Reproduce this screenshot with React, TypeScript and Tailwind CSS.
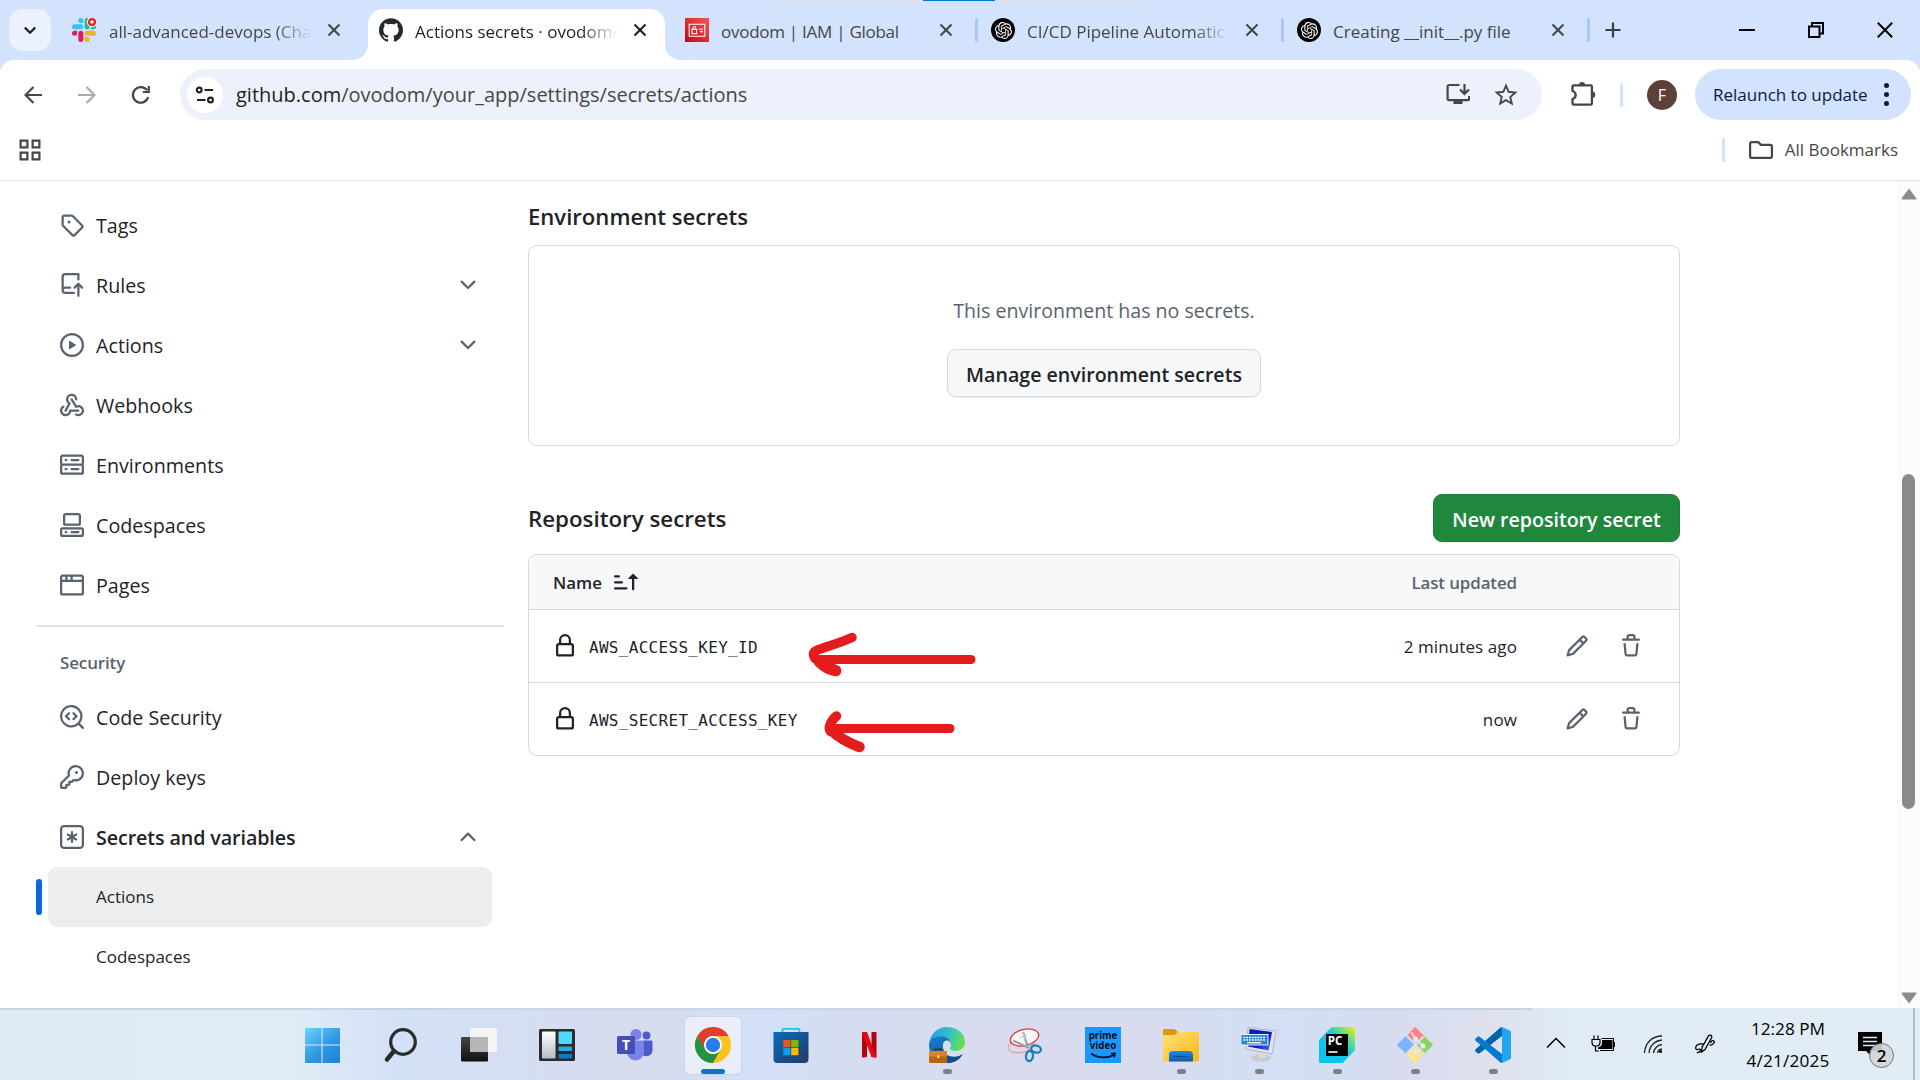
import type { ReactNode } from "react";
import { SiGithub, SiOpenai } from "react-icons/si";
import { MdStarBorder } from "react-icons/md";

const octicons = {
  tag: "M1 7.775V2.75C1 1.784 1.784 1 2.75 1h5.025c.464 0 .91.184 1.238.513l6.25 6.25a1.75 1.75 0 0 1 0 2.474l-5.026 5.026a1.75 1.75 0 0 1-2.474 0l-6.25-6.25A1.752 1.752 0 0 1 1 7.775Zm1.5 0c0 .066.026.13.073.177l6.25 6.25a.25.25 0 0 0 .354 0l5.025-5.025a.25.25 0 0 0 0-.354l-6.25-6.25a.25.25 0 0 0-.177-.073H2.75a.25.25 0 0 0-.25.25ZM6 5a1 1 0 1 1 0 2 1 1 0 0 1 0-2Z",
  rules: "M1 2.5A2.5 2.5 0 0 1 3.5 0h8.75a.75.75 0 0 1 .75.75v3.5a.75.75 0 0 1-1.5 0V1.5h-8a1 1 0 0 0-1 1v6.708A2.493 2.493 0 0 1 3.5 9h3.25a.75.75 0 0 1 0 1.5H3.5a1 1 0 0 0 0 2h5.75a.75.75 0 0 1 0 1.5H3.5A2.5 2.5 0 0 1 1 11.5Zm13.23 7.79v-.001l-1.224-1.224v6.184a.75.75 0 0 1-1.5 0V9.066L10.28 10.29a.75.75 0 0 1-1.06-1.061l2.505-2.504a.75.75 0 0 1 1.06 0L15.29 9.23a.751.751 0 0 1-.018 1.042.751.751 0 0 1-1.042.018Z",
  play: "M8 0a8 8 0 1 1 0 16A8 8 0 0 1 8 0ZM1.5 8a6.5 6.5 0 1 0 13 0 6.5 6.5 0 0 0-13 0Zm4.879-2.773 4.264 2.559a.25.25 0 0 1 0 .428l-4.264 2.559A.25.25 0 0 1 6 10.559V5.442a.25.25 0 0 1 .379-.215Z",
  webhook: "M5.5 4.25a2.25 2.25 0 0 1 4.5 0 .75.75 0 0 0 1.5 0 3.75 3.75 0 1 0-6.14 2.889l-2.272 4.258a.75.75 0 0 0 1.324.706L7 7.25a.75.75 0 0 0-.309-1.015A2.25 2.25 0 0 1 5.5 4.25ZM7.364 3.607a.75.75 0 0 1 1.03.257l2.608 4.349a3.75 3.75 0 1 1-.628 6.785.75.75 0 0 1 .752-1.299 2.25 2.25 0 1 0-.033-3.88.75.75 0 0 1-1.03-.256L7.107 4.636a.75.75 0 0 1 .257-1.03ZM2.9 8.776A.75.75 0 0 1 2.625 9.8 2.25 2.25 0 1 0 6 11.75a.75.75 0 0 1 .75-.751h5.5a.75.75 0 0 1 0 1.5H7.425a3.751 3.751 0 1 1-5.55-3.998.75.75 0 0 1 1.024.274Z",
  server: "M1.75 1h12.5c.966 0 1.75.784 1.75 1.75v4c0 .372-.116.717-.314 1 .198.283.314.628.314 1v4a1.75 1.75 0 0 1-1.75 1.75H1.75A1.75 1.75 0 0 1 0 12.75v-4c0-.358.109-.707.314-1a1.739 1.739 0 0 1-.314-1v-4C0 1.784.784 1 1.75 1ZM1.5 2.75v4c0 .138.112.25.25.25h12.5a.25.25 0 0 0 .25-.25v-4a.25.25 0 0 0-.25-.25H1.75a.25.25 0 0 0-.25.25Zm.25 5.75a.25.25 0 0 0-.25.25v4c0 .138.112.25.25.25h12.5a.25.25 0 0 0 .25-.25v-4a.25.25 0 0 0-.25-.25ZM7 4.75A.75.75 0 0 1 7.75 4h4.5a.75.75 0 0 1 0 1.5h-4.5A.75.75 0 0 1 7 4.75ZM7.75 10h4.5a.75.75 0 0 1 0 1.5h-4.5a.75.75 0 0 1 0-1.5ZM3 4.75A.75.75 0 0 1 3.75 4h.5a.75.75 0 0 1 0 1.5h-.5A.75.75 0 0 1 3 4.75ZM3.75 10h.5a.75.75 0 0 1 0 1.5h-.5a.75.75 0 0 1 0-1.5Z",
  codespaces: "M0 11.25c0-.966.784-1.75 1.75-1.75h12.5c.966 0 1.75.784 1.75 1.75v3A1.75 1.75 0 0 1 14.25 16H1.75A1.75 1.75 0 0 1 0 14.25Zm2-9.5C2 .784 2.784 0 3.75 0h8.5C13.216 0 14 .784 14 1.75v5a1.75 1.75 0 0 1-1.75 1.75h-8.5A1.75 1.75 0 0 1 2 6.75Zm1.75-.25a.25.25 0 0 0-.25.25v5c0 .138.112.25.25.25h8.5a.25.25 0 0 0 .25-.25v-5a.25.25 0 0 0-.25-.25Zm-2 9.5a.25.25 0 0 0-.25.25v3c0 .138.112.25.25.25h12.5a.25.25 0 0 0 .25-.25v-3a.25.25 0 0 0-.25-.25ZM7 12.75a.75.75 0 0 1 .75-.75h4.5a.75.75 0 0 1 0 1.5h-4.5a.75.75 0 0 1-.75-.75Zm-4 0a.75.75 0 0 1 .75-.75h.5a.75.75 0 0 1 0 1.5h-.5a.75.75 0 0 1-.75-.75Z",
  browser: "M0 2.75C0 1.784.784 1 1.75 1h12.5c.966 0 1.75.784 1.75 1.75v10.5A1.75 1.75 0 0 1 14.25 15H1.75A1.75 1.75 0 0 1 0 13.25ZM14.5 6h-13v7.25c0 .138.112.25.25.25h12.5a.25.25 0 0 0 .25-.25Zm-6-3.5v2h6V2.75a.25.25 0 0 0-.25-.25ZM5 2.5v2h2v-2Zm-3.25 0a.25.25 0 0 0-.25.25V4.5h2v-2Z",
  codescan: "M8.47 4.97a.75.75 0 0 0 0 1.06L9.94 7.5 8.47 8.97a.75.75 0 1 0 1.06 1.06l2-2a.75.75 0 0 0 0-1.06l-2-2a.75.75 0 0 0-1.06 0ZM6.53 6.03a.75.75 0 0 0-1.06-1.06l-2 2a.75.75 0 0 0 0 1.06l2 2a.75.75 0 1 0 1.06-1.06L5.06 7.5l1.47-1.47ZM12.246 13.307a7.501 7.501 0 1 1 1.06-1.06l2.474 2.473a.749.749 0 1 1-1.06 1.06l-2.474-2.473ZM1.5 7.5a6.002 6.002 0 0 0 3.608 5.504 6.002 6.002 0 0 0 6.486-1.117.748.748 0 0 1 .292-.293A6 6 0 1 0 1.5 7.5Z",
  key: "M10.5 0a5.499 5.499 0 1 1-1.288 10.848l-.932.932a.749.749 0 0 1-.53.22H7v.75a.749.749 0 0 1-.22.53l-.5.5a.749.749 0 0 1-.53.22H5v.75a.749.749 0 0 1-.22.53l-.5.5a.749.749 0 0 1-.53.22h-2A1.75 1.75 0 0 1 0 14.25v-2c0-.199.079-.389.22-.53l4.932-4.932A5.5 5.5 0 0 1 10.5 0Zm-4 5.5c-.001.431.069.86.205 1.269a.75.75 0 0 1-.181.768L1.5 12.56v1.69c0 .138.112.25.25.25h1.69l.06-.06v-1.19a.75.75 0 0 1 .75-.75h1.19l.06-.06v-1.19a.75.75 0 0 1 .75-.75h1.19l1.023-1.025a.75.75 0 0 1 .768-.18A4 4 0 1 0 6.5 5.5ZM11 6a1 1 0 1 1 0-2 1 1 0 0 1 0 2Z",
  asterisk: "M0 2.75A2.75 2.75 0 0 1 2.75 0h10.5A2.75 2.75 0 0 1 16 2.75v10.5A2.75 2.75 0 0 1 13.25 16H2.75A2.75 2.75 0 0 1 0 13.25ZM2.75 1.5c-.69 0-1.25.56-1.25 1.25v10.5c0 .69.56 1.25 1.25 1.25h10.5c.69 0 1.25-.56 1.25-1.25V2.75c0-.69-.56-1.25-1.25-1.25ZM8 4a.75.75 0 0 1 .75.75V6.7l1.69-.975a.75.75 0 0 1 .75 1.3L9.5 8l1.69.976a.75.75 0 0 1-.75 1.298L8.75 9.3v1.951a.75.75 0 0 1-1.5 0V9.299l-1.69.976a.75.75 0 0 1-.75-1.3L6.5 8l-1.69-.975a.75.75 0 0 1 .75-1.3l1.69.976V4.75A.75.75 0 0 1 8 4Z",
  lock: "M4 4a4 4 0 0 1 8 0v2h.25c.966 0 1.75.784 1.75 1.75v5.5A1.75 1.75 0 0 1 12.25 15h-8.5A1.75 1.75 0 0 1 2 13.25v-5.5C2 6.784 2.784 6 3.75 6H4Zm8.25 3.5h-8.5a.25.25 0 0 0-.25.25v5.5c0 .138.112.25.25.25h8.5a.25.25 0 0 0 .25-.25v-5.5a.25.25 0 0 0-.25-.25ZM10.5 6V4a2.5 2.5 0 1 0-5 0v2Z",
  pencil: "M11.013 1.427a1.75 1.75 0 0 1 2.474 0l1.086 1.086a1.75 1.75 0 0 1 0 2.474l-8.61 8.61c-.21.21-.47.364-.756.445l-3.251.93a.75.75 0 0 1-.927-.928l.929-3.25c.081-.286.235-.547.445-.758l8.61-8.61Zm.176 4.823L9.75 4.81l-6.286 6.287a.253.253 0 0 0-.064.108l-.558 1.953 1.953-.558a.253.253 0 0 0 .108-.064Zm1.238-3.763a.25.25 0 0 0-.354 0L10.811 3.75l1.439 1.44 1.263-1.263a.25.25 0 0 0 0-.354Z",
  trash: "M11 1.75V3h2.25a.75.75 0 0 1 0 1.5H2.75a.75.75 0 0 1 0-1.5H5V1.75C5 .784 5.784 0 6.75 0h2.5C10.216 0 11 .784 11 1.75ZM4.496 6.675l.66 6.6a.25.25 0 0 0 .249.225h5.19a.25.25 0 0 0 .249-.225l.66-6.6a.75.75 0 0 1 1.492.149l-.66 6.6A1.748 1.748 0 0 1 10.595 15h-5.19a1.75 1.75 0 0 1-1.741-1.575l-.66-6.6a.75.75 0 1 1 1.492-.15ZM6.5 1.75V3h3V1.75a.25.25 0 0 0-.25-.25h-2.5a.25.25 0 0 0-.25.25Z",
  sort: "m12.927 2.573 3 3A.25.25 0 0 1 15.75 6H13.5v6.75a.75.75 0 0 1-1.5 0V6H9.75a.25.25 0 0 1-.177-.427l3-3a.25.25 0 0 1 .354 0ZM0 12.25a.75.75 0 0 1 .75-.75h7.5a.75.75 0 0 1 0 1.5H.75a.75.75 0 0 1-.75-.75Zm0-4a.75.75 0 0 1 .75-.75h4.5a.75.75 0 0 1 0 1.5H.75A.75.75 0 0 1 0 8.25Zm0-4a.75.75 0 0 1 .75-.75h2.5a.75.75 0 0 1 0 1.5H.75A.75.75 0 0 1 0 4.25Z",
  down: "M12.78 5.22a.749.749 0 0 1 0 1.06l-4.25 4.25a.749.749 0 0 1-1.06 0L3.22 6.28a.749.749 0 1 1 1.06-1.06L8 8.939l3.72-3.719a.749.749 0 0 1 1.06 0Z",
  up: "M3.22 10.53a.749.749 0 0 1 0-1.06l4.25-4.25a.749.749 0 0 1 1.06 0l4.25 4.25a.749.749 0 1 1-1.06 1.06L8 6.811 4.28 10.53a.749.749 0 0 1-1.06 0Z",
};
type OcticonName = keyof typeof octicons;

function Octicon({ name, className = "" }: { name: OcticonName; className?: string }) {
  return (
    <svg viewBox="0 0 16 16" className={`h-6 w-6 shrink-0 fill-current ${className}`}>
      <path d={octicons[name]} />
    </svg>
  );
}

/* ---------- Browser tabs ---------- */

function SlackIcon() {
  return (
    <svg viewBox="0 0 24 24" className="-ml-px h-6 w-6">
      <path fill="#E01E5A" d="M5.042 15.165a2.528 2.528 0 0 1-2.52 2.523A2.528 2.528 0 0 1 0 15.165a2.527 2.527 0 0 1 2.522-2.52h2.52v2.52zM6.313 15.165a2.527 2.527 0 0 1 2.521-2.52 2.527 2.527 0 0 1 2.521 2.52v6.313A2.528 2.528 0 0 1 8.834 24a2.528 2.528 0 0 1-2.521-2.522v-6.313z" />
      <path fill="#36C5F0" d="M8.834 5.042a2.528 2.528 0 0 1-2.521-2.52A2.528 2.528 0 0 1 8.834 0a2.528 2.528 0 0 1 2.521 2.522v2.52H8.834zM8.834 6.313a2.528 2.528 0 0 1 2.521 2.521 2.528 2.528 0 0 1-2.521 2.521H2.522A2.528 2.528 0 0 1 0 8.834a2.528 2.528 0 0 1 2.522-2.521h6.312z" />
      <path fill="#2EB67D" d="M18.956 8.834a2.528 2.528 0 0 1 2.522-2.521A2.528 2.528 0 0 1 24 8.834a2.528 2.528 0 0 1-2.522 2.521h-2.522V8.834zM17.688 8.834a2.528 2.528 0 0 1-2.523 2.521 2.527 2.527 0 0 1-2.52-2.521V2.522A2.527 2.527 0 0 1 15.165 0a2.528 2.528 0 0 1 2.523 2.522v6.312z" />
      <path fill="#ECB22E" d="M15.165 18.956a2.528 2.528 0 0 1 2.523 2.522A2.528 2.528 0 0 1 15.165 24a2.527 2.527 0 0 1-2.52-2.522v-2.522h2.52zM15.165 17.688a2.527 2.527 0 0 1-2.52-2.523 2.526 2.526 0 0 1 2.52-2.52h6.313A2.527 2.527 0 0 1 24 15.165a2.528 2.528 0 0 1-2.522 2.523h-6.313z" />
      <circle cx="20" cy="4" r="5.3" fill="#d3e2fd" />
      <circle cx="20" cy="4" r="2.9" fill="#fff" stroke="#f0191f" strokeWidth="2.2" />
    </svg>
  );
}

function AwsIcon() {
  return (
    <svg viewBox="0 0 24 24" className="h-6 w-6">
      <defs>
        <linearGradient id="aws" x1="0" y1="1" x2="1" y2="0">
          <stop offset="0" stopColor="#bd0816" />
          <stop offset="1" stopColor="#ff5252" />
        </linearGradient>
      </defs>
      <path fill="url(#aws)" d="M0 0h24v24H0z" />
      <g fill="none" stroke="#fff" strokeWidth="1.1">
        <path d="M4.2 6.2h15.6v12H4.2zM7 11.4h4.6v4.2H7zM8 11.2V9.8a1.3 1.3 0 0 1 2.6 0v1.4M14 11.3h4M15 13.6h3" />
      </g>
    </svg>
  );
}

function GptIcon() {
  return (
    <span className="flex h-6 w-6 items-center justify-center rounded-full bg-black text-white">
      <SiOpenai className="h-[17px] w-[17px]" />
    </span>
  );
}

function CloseIcon() {
  return (
    <svg viewBox="0 0 18 18" className="h-[18px] w-[18px] shrink-0 fill-none stroke-current" strokeWidth="2.1">
      <path d="M3.500 3.500l11 11M14.500 3.500l-11 11" />
    </svg>
  );
}

type TabProps = { icon: ReactNode; title: string; active?: boolean; faded?: boolean; separator?: boolean; tight?: boolean };

function Tab({ icon, title, active, faded, separator, tight }: TabProps) {
  const fade = faded ? "[mask-image:linear-gradient(to_right,#000_165px,transparent_203px)]" : "";
  const tracking = tight ? "tracking-[-0.27px]" : "";
  return (
    <div className="relative flex w-[306px] shrink-0 items-center pt-[9px]">
      <div className={`flex h-[51px] w-[297px] items-center rounded-t-[15px] pl-[11px] ${active ? "bg-white text-[#1f1f1f]" : "text-[#454746]"}`}>
        <span className="mb-[9px] w-6 shrink-0">{icon}</span>
        <span className={`mb-[5px] ml-3 w-[202px] shrink-0 text-[17px] whitespace-nowrap ${fade} ${tracking}`}>{title}</span>
        <span className="mb-[9px] ml-[14px]"><CloseIcon /></span>
      </div>
      {separator && <span className="mb-[9px] ml-[4px] h-6 w-[3px] rounded-sm bg-[#a8c7fa]" />}
      {active && (
        <>
          <span className="absolute bottom-0 -left-[15px] h-[15px] w-[15px] bg-[radial-gradient(circle_at_0_0,transparent_14.5px,#fff_15px)]" />
          <span className="absolute right-[-6px] bottom-0 h-[15px] w-[15px] bg-[radial-gradient(circle_at_100%_0,transparent_14.5px,#fff_15px)]" />
        </>
      )}
    </div>
  );
}

function TabStrip() {
  return (
    <div className="relative flex h-[60px] bg-[#d3e2fd]">
      <div className="absolute top-0 left-[779px] flex h-px w-[362px] bg-[#e3e3e3] pl-[144px]">
        <span className="h-px w-[72px] bg-[#0078d4]" />
      </div>
      <div className="mt-[9px] mr-[11px] ml-[9px] flex h-[42px] w-[42px] items-center justify-center rounded-[14px] bg-[#ebf1fe]">
        <svg viewBox="0 0 14 14" className="h-[14px] w-[14px] fill-none stroke-[#1f1f1f]" strokeWidth="2.3">
          <path d="M1.800 4.500 7 9.700l5.200-5.200" />
        </svg>
      </div>
      <Tab icon={<SlackIcon />} title="all-advanced-devops (Cha" faded />
      <Tab icon={<SiGithub className="h-6 w-6 text-[#24292f]" />} title="Actions secrets · ovodom/" active faded />
      <Tab icon={<AwsIcon />} title="ovodom | IAM | Global" separator tight />
      <Tab icon={<GptIcon />} title="CI/CD Pipeline Automatic" faded separator />
      <Tab icon={<GptIcon />} title="Creating __init__.py file" separator />
      <div className="flex flex-1 items-center pb-[1px] pl-[13px] text-[#3c4043]">
        <svg viewBox="0 0 16 16" className="h-4 w-4 fill-none stroke-current" strokeWidth="2.2">
          <path d="M8 .5v15M.5 8h15" />
        </svg>
      </div>
      <div className="flex items-center gap-[53px] pr-[27px] pb-[1px]">
        <svg viewBox="0 0 16 16" className="h-4 w-4 fill-none stroke-black" strokeWidth="2">
          <path d="M0 8h16" />
        </svg>
        <svg viewBox="0 0 16 16" className="h-4 w-4 fill-none stroke-black" strokeWidth="2">
          <path d="M1 4.500h10.500V15H1zM4 4V1h11v10.500h-3" />
        </svg>
        <svg viewBox="0 0 16 16" className="h-4 w-4 fill-none stroke-black" strokeWidth="2">
          <path d="M.8.8l14.400 14.400M15.200.8.8 15.200" />
        </svg>
      </div>
    </div>
  );
}

/* ---------- Toolbar ---------- */

function Toolbar() {
  return (
    <div className="bg-[#d3e2fd]">
      <div className="flex h-[68px] items-center rounded-t-[14px] bg-white pt-[1px] pl-6 text-[#454746]">
        <svg viewBox="0 0 18 18" className="h-[18px] w-[18px] fill-none stroke-current" strokeWidth="2.2">
          <path d="M18 9H2M9.500 1 1.500 9l8 8" />
        </svg>
        <svg viewBox="0 0 18 18" className="ml-9 h-[18px] w-[18px] fill-none stroke-[#a9abab]" strokeWidth="2.2">
          <path d="M0 9h16M8.500 1l8 8-8 8" />
        </svg>
        <svg viewBox="0 0 20 20" className="ml-[35px] h-5 w-5 fill-none stroke-current" strokeWidth="2.2">
          <path d="M17.200 12.200A7.800 7.800 0 1 1 16 5.200M17.800 1v6h-6" />
        </svg>
        <div className="ml-[29px] flex h-[51px] w-[1362px] items-center rounded-full bg-[#ecf1fb]">
          <span className="ml-[7px] flex h-9 w-9 items-center justify-center rounded-full bg-white">
            <svg viewBox="0 0 20 18" className="h-[18px] w-5 fill-none stroke-[#1f1f1f]" strokeWidth="2.1">
              <circle cx="4.200" cy="4" r="2.400" />
              <path d="M9.500 4H18M2 14h8.500" />
              <circle cx="15.500" cy="14" r="2.400" />
            </svg>
          </span>
          <span className="ml-[13px] flex-1 text-[20px] whitespace-nowrap">
            <span className="text-[#1f1f1f]">github.com</span>/ovodom/your_app/settings/secrets/actions
          </span>
          <svg viewBox="0 0 24 22" className="mb-[1px] h-[22px] w-6 fill-none stroke-current" strokeWidth="2.200">
            <path d="M13.500 2H3.200A1.600 1.600 0 0 0 1.600 3.600v12a1.600 1.600 0 0 0 1.600 1.600h18.400a1.600 1.600 0 0 0 1.600-1.600V13M18.500 1v9M14 6.500l4.500 4.500L23 6.500" />
            <path d="M7.500 17h9v4h-9z" className="fill-current stroke-none" />
          </svg>
          <MdStarBorder className="mr-[22px] ml-[22px] h-7 w-7" />
        </div>
        <svg viewBox="0 0 26 26" className="mb-[2px] ml-[29px] h-[26px] w-[26px] fill-none stroke-current" strokeWidth="2.300" strokeLinejoin="round">
          <path d="M1.500 5.500q0-1.200 1.200-1.200h17q1.200 0 1.200 1.200v17q0 1.200-1.200 1.200h-17q-1.200 0-1.200-1.200v-4.500q3.200-1 3.200-4t-3.200-4z" />
          <path d="M8 4a3 3 0 0 1 6 0zM21 10.500a3 3 0 0 1 0 6.500z" className="fill-current stroke-none" />
        </svg>
        <span className="ml-[23px] h-6 w-[3px] rounded-sm bg-[#d3e2fd]" />
        <span className="ml-6 flex h-[30px] w-[30px] items-center justify-center rounded-full bg-[#5d4037] text-[16px] text-white">F</span>
        <div className="ml-[18px] flex h-[51px] w-[216px] items-center rounded-full bg-[#d3e2fd] pl-[18px] text-[17px] whitespace-nowrap text-[#041e49]">
          <span className="w-[164px] pt-[1px]">Relaunch to update</span>
          <span className="ml-[7px] flex flex-col gap-1">
            <span className="h-[5px] w-[5px] rounded-full bg-[#041e49]" />
            <span className="h-[5px] w-[5px] rounded-full bg-[#041e49]" />
            <span className="h-[5px] w-[5px] rounded-full bg-[#041e49]" />
          </span>
        </div>
      </div>
      <div className="flex h-[53px] items-center justify-between border-b border-[#dfe1e3] bg-white pr-[22px] pb-2 pl-[19px] text-[#454746]">
        <svg viewBox="0 0 22 22" className="h-[22px] w-[22px] fill-none stroke-current" strokeWidth="2.200">
          <path d="M1.600 1.600h6.800v6.800H1.600zM13.600 1.600h6.800v6.800h-6.800zM1.600 13.600h6.800v6.800H1.600zM13.600 13.600h6.800v6.800h-6.800z" />
        </svg>
        <div className="flex items-center">
          <span className="mr-6 h-6 w-[3px] rounded-sm bg-[#d3e2fd]" />
          <svg viewBox="0 0 24 18" className="h-[18px] w-6 fill-none stroke-current" strokeWidth="2.200">
            <path d="M1.100 15.200V2.800c0-1 .7-1.700 1.700-1.700h6.400l2.800 2.700h9.200c1 0 1.700.7 1.700 1.700v9.700c0 1-.7 1.700-1.700 1.700H2.800c-1 0-1.700-.7-1.700-1.700z" />
          </svg>
          <span className="ml-3 text-[17px] leading-6">All Bookmarks</span>
        </div>
      </div>
    </div>
  );
}

/* ---------- Settings sidebar ---------- */

function NavItem({ icon, label, chevron, bold }: { icon: OcticonName; label: string; chevron?: OcticonName; bold?: boolean }) {
  return (
    <div className="ml-3 flex h-[60px] items-center px-3 text-[#59636e]">
      <Octicon name={icon} />
      <span className={`ml-3 flex-1 pt-[2px] text-[19.7px] text-[#1f2328] ${bold ? "font-semibold tracking-[-0.1px]" : ""}`}>{label}</span>
      {chevron && <Octicon name={chevron} className="mr-3" />}
    </div>
  );
}

function Sidebar() {
  return (
    <aside className="w-[468px] shrink-0 pt-[14px]">
      <NavItem icon="tag" label="Tags" />
      <NavItem icon="rules" label="Rules" chevron="down" />
      <NavItem icon="play" label="Actions" chevron="down" />
      <NavItem icon="webhook" label="Webhooks" />
      <NavItem icon="server" label="Environments" />
      <NavItem icon="codespaces" label="Codespaces" />
      <NavItem icon="browser" label="Pages" />
      <div className="mt-[10px] h-[2px] bg-[#dfe4e8]" />
      <h3 className="flex h-[60px] items-center pt-[11px] pl-6 text-[17px] font-semibold tracking-[-0.15px] text-[#59636e]">Security</h3>
      <NavItem icon="codescan" label="Code Security" />
      <NavItem icon="key" label="Deploy keys" />
      <NavItem icon="asterisk" label="Secrets and variables" chevron="up" bold />
      <div className="flex h-[60px] items-center gap-[6px] text-[17px] text-[#1f2328]">
        <span className="h-9 w-[6px] rounded-full bg-[#0969da]" />
        <span className="flex h-[60px] w-[444px] items-center rounded-[9px] bg-[#ecedef] pl-12">Actions</span>
      </div>
      <div className="flex h-[60px] items-center pl-[60px] text-[17px] text-[#1f2328]">Codespaces</div>
    </aside>
  );
}

/* ---------- Secrets ---------- */

function SecretRow({ name, updated }: { name: string; updated: string }) {
  return (
    <div className="flex h-[73px] items-center border-t border-[#d1d9e0] pr-9 pl-6 text-[#1f2328]">
      <Octicon name="lock" />
      <span className="ml-3 flex-1 pt-1 font-['DejaVu_Sans_Mono',monospace] text-[16px] tracking-[0.3px]">{name}</span>
      <span className="pt-[2px] text-[17px] tracking-[0.1px]">{updated}</span>
      <Octicon name="pencil" className="ml-12 text-[#59636e]" />
      <Octicon name="trash" className="ml-[30px] text-[#59636e]" />
    </div>
  );
}

function RedArrows() {
  return (
    <svg viewBox="0 0 190 130" className="absolute top-[445px] left-[272px] h-[130px] w-[190px] fill-none stroke-[#e61b1b]" strokeLinecap="round" strokeLinejoin="round">
      <path strokeWidth="9" d="M171 33.500H20" />
      <path strokeWidth="9.500" d="M52 11.500C40 17 28 20 17.500 24c-5 2-5 5-2 9" />
      <path strokeWidth="10.500" d="M19 36C23 40 29 44 36 45" />
      <path strokeWidth="7" d="M19 35l18 8" />
      <path strokeWidth="9" d="M150 102.500H32" />
      <path strokeWidth="9.500" d="M36.500 90c-6 5-9 12-6 15.500" />
      <path strokeWidth="10.500" d="M31 104c8 8 18 13 28.500 17" />
    </svg>
  );
}

function Secrets() {
  return (
    <main className="relative ml-6 w-[1152px] shrink-0 text-[#1f2328]">
      <h2 className="flex h-[64px] items-center pt-[8px] text-[22.1px] font-semibold">Environment secrets</h2>
      <section className="flex h-[201px] flex-col items-center rounded-[9px] border border-[#d1d9e0] pt-[50px]">
        <p className="h-[30px] text-[19.6px] leading-[30px] text-[#59636e]">This environment has no secrets.</p>
        <button className="mt-[23px] h-12 w-[314px] rounded-[9px] border border-[#d1d9e0] bg-[#f6f8fa] pt-[3px] text-[19.6px] font-semibold shadow-[0_1px_1px_rgba(31,35,40,0.06)]">
          Manage environment secrets
        </button>
      </section>
      <div className="mt-12 flex h-12 items-center justify-between">
        <h2 className="pt-[2px] text-[22.3px] font-semibold">Repository secrets</h2>
        <button className="h-12 w-[247px] rounded-[9px] border border-[#1f7d39] bg-[#1f883d] pt-[3px] text-[19.6px] font-semibold text-white shadow-[0_1px_1px_rgba(31,35,40,0.1)]">
          New repository secret
        </button>
      </div>
      <section className="mt-3 overflow-hidden rounded-[9px] border border-[#d1d9e0]">
        <div className="flex h-[54px] items-center bg-[#f6f8fa] pl-6 text-[16.9px] font-semibold">
          <span className="pt-[2px]">Name</span>
          <Octicon name="sort" className="ml-3" />
          <span className="mr-[162px] ml-auto pt-[2px] tracking-[-0.1px] text-[#59636e]">Last updated</span>
        </div>
        <SecretRow name="AWS_ACCESS_KEY_ID" updated="2 minutes ago" />
        <SecretRow name="AWS_SECRET_ACCESS_KEY" updated="now" />
      </section>
      <RedArrows />
    </main>
  );
}

function Scrollbar() {
  return (
    <div className="ml-auto flex w-[23px] flex-col items-center bg-[#fcfcfc]">
      <svg viewBox="0 0 16 12" className="mt-[7px] h-3 w-4 fill-[#8b8b8b]"><path d="M8 .5 15.500 10.500q0 1-1 1h-13q-1 0-1-1z" /></svg>
      <span className="mt-[274px] h-[335px] w-[13px] rounded-full bg-[#8b8b8b]" />
      <svg viewBox="0 0 16 12" className="mt-auto mb-[4px] h-3 w-4 fill-[#8b8b8b]"><path d="M8 11.500.5 1.500q0-1 1-1h13q1 0 1 1z" /></svg>
    </div>
  );
}

/* ---------- Taskbar ---------- */

function StartIcon() {
  return (
    <svg viewBox="0 0 36 36" className="mr-[2px] h-9 w-9">
      <defs>
        <linearGradient id="start" gradientUnits="userSpaceOnUse" x1="0" y1="0" x2="30" y2="36">
          <stop offset="0" stopColor="#6fd6ff" />
          <stop offset=".6" stopColor="#3099e0" />
          <stop offset="1" stopColor="#1e86d8" />
        </linearGradient>
      </defs>
      <path fill="url(#start)" d="M2 1h15.500v16.500H1V2q0-1 1-1zM18.500 1H35q1 0 1 1v15.500H18.500zM1 18.500h16.500V36H2q-1 0-1-1zM18.500 18.500H36V35q0 1-1 1H18.500z" />
    </svg>
  );
}

function SearchIcon() {
  return (
    <svg viewBox="0 0 36 36" className="mr-[2px] h-9 w-9 fill-none stroke-[#2b2b2b]">
      <circle cx="21" cy="15" r="12.300" strokeWidth="3.200" />
      <path d="M12 24 5 32.500" strokeWidth="4.500" strokeLinecap="round" />
    </svg>
  );
}

function TaskViewIcon() {
  return (
    <svg viewBox="0 0 36 36" className="h-9 w-9">
      <defs>
        <linearGradient id="tv" x1="0" y1="0" x2="0" y2="1"><stop offset="0" stopColor="#444" /><stop offset="1" stopColor="#111" /></linearGradient>
      </defs>
      <rect x="0" y="10" width="27" height="24.500" rx="1.200" fill="url(#tv)" />
      <rect x="9" y="1" width="27" height="24" rx="1.200" fill="#f4f4f4" />
      <path d="M9 10h18v15H9z" fill="#b5b5b5" />
    </svg>
  );
}

function WidgetsIcon() {
  return (
    <svg viewBox="0 0 36 36" className="h-9 w-9">
      <defs>
        <linearGradient id="wg" x1="0" y1="0" x2="0" y2="1"><stop offset="0" stopColor="#fff" /><stop offset="1" stopColor="#b9bcc2" /></linearGradient>
      </defs>
      <rect x="0" y="2" width="36" height="32" rx="1.500" fill="#2a2c2b" />
      <rect x="3" y="4.500" width="13.500" height="27" rx="1" fill="url(#wg)" />
      <rect x="19.500" y="4.500" width="13.500" height="12.500" rx="1" fill="#4fd9fb" />
      <rect x="19.500" y="19.500" width="13.500" height="4.500" rx=".8" fill="#29aae3" />
      <rect x="19.500" y="27" width="13.500" height="4.500" rx=".8" fill="#0a78d6" />
    </svg>
  );
}

function TeamsIcon() {
  return (
    <svg viewBox="0 0 36 36" className="h-9 w-9">
      <circle cx="29.500" cy="8.500" r="3.900" fill="#5059c9" />
      <path d="M26 13.500h8.500q1 0 1 1V23a6 6 0 0 1-9.500 5z" fill="#5059c9" />
      <circle cx="19" cy="7.500" r="5.600" fill="#7b83eb" />
      <path d="M11 13.500h14.500q1.500 0 1.500 1.500v10a8.500 8.500 0 0 1-17 0V13.500z" fill="#7b83eb" />
      <rect x="0" y="9" width="18" height="18" rx="1.500" fill="#464eb8" />
      <text x="9" y="23" textAnchor="middle" fill="#fff" fontSize="14" fontWeight="700" fontFamily="Open Sans">T</text>
    </svg>
  );
}

function ChromeIcon() {
  return (
    <svg viewBox="0 0 36 36" className="h-9 w-9">
      <circle cx="18" cy="18" r="18" fill="#fcc31e" />
      <path d="M2.400 9A18 18 0 0 0 18 36l7.800-13.500A9 9 0 0 1 10.200 22.500z" fill="#229342" />
      <path d="M2.400 9 10.200 22.500 18 18z" fill="#229342" />
      <path d="M2.400 9A18 18 0 0 1 33.600 9H18a9 9 0 0 0-7.800 13.500z" fill="#e33b2e" />
      <circle cx="18" cy="18" r="9" fill="#fff" />
      <circle cx="18" cy="18" r="7.200" fill="#2a7bf0" />
    </svg>
  );
}

function StoreIcon() {
  return (
    <svg viewBox="0 0 36 36" className="mr-px h-9 w-9">
      <defs>
        <linearGradient id="st" x1="0" y1="0" x2="1" y2="1"><stop offset="0" stopColor="#0a6cbe" /><stop offset="1" stopColor="#243a63" /></linearGradient>
      </defs>
      <path d="M9.500 7V2.800q0-1 1-1h15q1 0 1 1V7" fill="none" stroke="#29bdea" strokeWidth="1.800" />
      <path d="M.5 5h35v27q0 4-4 4h-27q-4 0-4-4z" fill="url(#st)" />
      <path d="M10.200 13h7.200v7.200h-7.200z" fill="#f25022" />
      <path d="M18.200 13h7.200v7.200h-7.200z" fill="#7fba00" />
      <path d="M10.200 21h7.200v7.200h-7.200z" fill="#00a4ef" />
      <path d="M18.200 21h7.200v7.200h-7.200z" fill="#ffb900" />
    </svg>
  );
}

function NetflixIcon() {
  return (
    <svg viewBox="0 0 36 36" className="h-9 w-9">
      <path d="M11 5h5v25q-2.500.1-5 .5zM20.500 5h5v25.500q-2.500-.4-5-.5z" fill="#b1060f" />
      <path d="M11 5h5l9.500 25.500q-2.500-.4-5-.5z" fill="#e50914" />
    </svg>
  );
}

function EdgeIcon() {
  return (
    <svg viewBox="0 0 36 36" className="h-9 w-9">
      <defs>
        <linearGradient id="e1" x1="0" y1=".3" x2="1" y2=".6"><stop offset="0" stopColor="#1f9fe0" /><stop offset=".5" stopColor="#35c1c6" /><stop offset="1" stopColor="#66e04e" /></linearGradient>
        <linearGradient id="e2" x1="0" y1="0" x2=".4" y2="1"><stop offset="0" stopColor="#1480d0" /><stop offset="1" stopColor="#0c59a4" /></linearGradient>
      </defs>
      <path d="M0 17C1 7 8.500 0 18 0c10 0 18 6.500 18 15 0 5.500-4 9-9 9-4 0-6-1.200-6-2.500 0-.8 1-1.500 1-3.500 0-4-4-8-10-8-6 0-11 3-12 7z" fill="url(#e1)" />
      <path d="M0 18c0-5 5-8.700 12-8.700 6 0 10 4 10 8.200 0-2-1.500-4-4.200-4-3.500 0-4.300 4-3.800 7.500 1 6 7 8 12 8 3.500 0 6-1 7.500-1.700C31.500 32 26 36 18 36 8 36 0 28 0 18z" fill="url(#e2)" />
      <path d="M14.500 22c1.500 5 7 7.500 12 7 3.500-.3 5.500-1.200 7-1.700C31 32.500 25.500 36 19 36c-3-4-5-9-4.500-14z" fill="#124c91" />
      <path d="M18 23q3 5.500 9 5.300 4-.3 6.500-1.300-3 2.500-8 2.800-5 0-7.500-1.800z" fill="#d5e9f4" />
      <rect x="0" y="24" width="18" height="12" rx="1" fill="#b9650f" />
      <path d="M0 24h18v5.500H0z" fill="#d78422" />
      <path d="M6 24v-1.800h6V24" fill="none" stroke="#4a2a0a" strokeWidth="1.300" />
      <path d="M8 28.500h2.500V31H8z" fill="#ffdf5e" />
    </svg>
  );
}

function SnipIcon() {
  return (
    <svg viewBox="0 0 36 36" className="h-9 w-9 fill-none">
      <ellipse cx="14" cy="19" rx="13" ry="6.500" transform="rotate(-10 14 19)" stroke="#e79aa0" strokeWidth="1.200" />
      <ellipse cx="17.500" cy="10.500" rx="14.500" ry="8" transform="rotate(-14 17.500 10.500)" fill="#f7f7f9" stroke="#dd3c41" strokeWidth="1.300" />
      <path d="M16 5l5 16M6 13.500 22 21" stroke="#9b9fa5" strokeWidth="2.200" />
      <path d="M16 5l2 9M12 11l8-3" stroke="#c9ccd0" strokeWidth="1" />
      <ellipse cx="29" cy="22" rx="5" ry="3.500" transform="rotate(15 29 22)" stroke="#1c7fc4" strokeWidth="2.300" />
      <ellipse cx="22.500" cy="29" rx="3.500" ry="5" transform="rotate(8 22.500 29)" stroke="#1c7fc4" strokeWidth="2.300" />
    </svg>
  );
}

function PrimeIcon() {
  return (
    <div className="flex h-9 w-9 flex-col items-center bg-[#1a98ff] pt-1">
      <span className="text-center text-[9.700px] leading-[10px] font-bold text-[#06111b]">
        prime
        <br />
        video
      </span>
      <svg viewBox="0 0 28 8" className="mt-[1px] h-2 w-7 shrink-0 fill-none stroke-[#06111b]" strokeWidth="1.700">
        <path d="M2 1.500c7 5 17 5 23.500 1M22 1.500l4-.2-1 4" />
      </svg>
    </div>
  );
}

function FolderIcon() {
  return (
    <svg viewBox="0 0 36 36" className="h-9 w-9">
      <defs>
        <linearGradient id="fo" x1="0" y1="0" x2="1" y2="1"><stop offset="0" stopColor="#ffe07a" /><stop offset="1" stopColor="#f9b813" /></linearGradient>
        <linearGradient id="fb" x1="0" y1="0" x2="0" y2="1"><stop offset="0" stopColor="#1a8be0" /><stop offset="1" stopColor="#0c5ea8" /></linearGradient>
      </defs>
      <path d="M0 3q0-1 1-1h10.500l3.500 3h20q1 0 1 1v5H0z" fill="#dc9a08" />
      <path d="M0 9q0-1 1-1h10.500L15 5h20q1 0 1 1v27.500q0 1-1 1H1q-1 0-1-1z" fill="url(#fo)" />
      <path d="M6 34.500V28q0-4 4-4h16q4 0 4 4v6.500z" fill="url(#fb)" />
      <path d="M10.500 29.500h15" stroke="#0a4c8c" strokeWidth="1.200" />
    </svg>
  );
}

function MonitorIcon() {
  return (
    <svg viewBox="0 0 36 36" className="h-9 w-9">
      <defs>
        <linearGradient id="mo" x1="0" y1="0" x2="1" y2="1"><stop offset="0" stopColor="#0f1fb8" /><stop offset=".6" stopColor="#0a19d0" /><stop offset="1" stopColor="#5f86f0" /></linearGradient>
      </defs>
      <ellipse cx="20" cy="31" rx="10" ry="3.800" fill="#c8cbd0" />
      <path d="M16 24l9 1v6h-8z" fill="#d9dbde" />
      <path d="M7 .5 35 4l-4 23L5 22z" fill="#e3e5e8" stroke="#9ea2a8" strokeWidth=".7" />
      <path d="M8.500 2 31 5l-3.300 18.500L7 19.500z" fill="url(#mo)" />
      <rect x="0" y="7.500" width="27" height="10.500" fill="#2f86cf" stroke="#e8f2fb" strokeWidth="1" />
      <path d="M2.500 10.500h22M2.500 13h22" stroke="#fff" strokeWidth="1.300" strokeDasharray="1.800 1" />
      <path d="M6 15.700h14" stroke="#fff" strokeWidth="1.300" />
    </svg>
  );
}

function PyCharmIcon() {
  return (
    <svg viewBox="0 0 36 36" className="h-9 w-9">
      <defs>
        <linearGradient id="pc" x1=".1" y1=".9" x2="1" y2="0"><stop offset="0" stopColor="#07c3f2" /><stop offset=".5" stopColor="#14c9dd" /><stop offset=".75" stopColor="#6fe07c" /><stop offset="1" stopColor="#fdf000" /></linearGradient>
      </defs>
      <path d="M12 .5Q12.500 0 13.500 0H34.500Q36 0 36 1.500V22q0 1-.6 1.600L24.500 35.300q-.6.700-1.500.700H1.500Q0 36 0 34.500V14q0-1 .6-1.600z" fill="url(#pc)" />
      <path d="M7 7h22v22H7z" fill="#000" />
      <text x="8.700" y="17.700" fill="#fff" fontSize="11.500" fontWeight="700" fontFamily="Open Sans">PC</text>
      <path d="M9.500 25h9" stroke="#fff" strokeWidth="1.600" />
    </svg>
  );
}

function GitIcon() {
  return (
    <svg viewBox="0 0 36 36" className="h-9 w-9">
      <path d="M17 .7q1-1 2 0L27 9l-8.500 8.500L10 9z" fill="#ff8080" />
      <path d="M.7 19q-1-1 0-2L9 9l9 9-8.500 9z" fill="#80b3ff" />
      <path d="M35.300 19q1-1 0-2L27 9l-9 9 8.500 9z" fill="#87d35f" />
      <path d="M17 35.300q1 1 2 0L26.500 27 18 18l-8.500 9z" fill="#ffe680" />
      <path d="M10 9l17 17.500M26.500 9.500l-17 17" stroke="#dbe0f0" strokeWidth="2" />
      <path d="M14.500 5.500l4 6v16M18.500 12l7.500 7" stroke="#dbe0f0" strokeWidth="2.200" fill="none" />
      <circle cx="18.500" cy="12" r="2.500" fill="#e6e8f0" />
      <circle cx="26" cy="19" r="2.600" fill="#e6e8f0" />
      <circle cx="18.500" cy="25" r="2.700" fill="#e6e8f0" />
    </svg>
  );
}

function VsCodeIcon() {
  return (
    <svg viewBox="0 0 36 36" className="h-9 w-9">
      <path d="M.6 22.300q-1 1.200.2 2.400l1.800 1.600q1 .7 2 0L27 9V0q-.9 0-1.800.8z" fill="#0065a9" />
      <path d="M.6 13.700q-1-1.200.2-2.400l1.800-1.600q1-.7 2 0L27 27v9q-.9 0-1.800-.8z" fill="#007acc" />
      <path d="M25.200 35.200q1.300 1.200 3 .4l6.500-3.100q1.300-.7 1.300-2V5.500q0-1.300-1.300-2L28.200.4q-1.700-.8-3 .4Q27 .3 27 2v32q0 1.700-1.800 1.200z" fill="#23a5f1" />
    </svg>
  );
}

const apps: { icon: ReactNode; state?: "active" | "open" }[] = [
  { icon: <StartIcon /> },
  { icon: <SearchIcon /> },
  { icon: <TaskViewIcon /> },
  { icon: <WidgetsIcon /> },
  { icon: <TeamsIcon /> },
  { icon: <ChromeIcon />, state: "active" },
  { icon: <StoreIcon /> },
  { icon: <NetflixIcon /> },
  { icon: <EdgeIcon />, state: "open" },
  { icon: <SnipIcon /> },
  { icon: <PrimeIcon /> },
  { icon: <FolderIcon />, state: "open" },
  { icon: <MonitorIcon />, state: "open" },
  { icon: <PyCharmIcon />, state: "open" },
  { icon: <GitIcon />, state: "open" },
  { icon: <VsCodeIcon />, state: "open" },
];

function Tray() {
  return (
    <div className="flex flex-1 items-start pl-[14px] text-black">
      <svg viewBox="0 0 20 12" className="mt-[29px] h-3 w-5 fill-none stroke-black" strokeWidth="1.500"><path d="M1 10.500 10 1.500l9 9" /></svg>
      <svg viewBox="0 0 26 18" className="mt-[27px] ml-[25px] h-[18px] w-[26px]">
        <path d="M3 .5v4M7 .5v4M1 4.500h8v3a3.500 3.500 0 0 1-3 3.500h-2A3.500 3.500 0 0 1 1 7.500zM4.500 11v5H8" fill="none" stroke="#000" strokeWidth="1.200" />
        <path d="M9 15.500h13.500v-12H10.500" stroke="#000" strokeWidth="1" fill="none" />
        <path d="M11 5h10.500v9H7v-1.500q4-1 4-4.500zM22.500 7H24v5h-1.500z" fill="#000" />
      </svg>
      <svg viewBox="0 0 20 20" className="mt-[26px] ml-[26px] h-5 w-5 fill-none stroke-[#222]" strokeWidth="1.300">
        <path d="M1.500 19C2 9 9 2 19 2M6 19c.5-7 6-12.500 13-13M10.500 19c.5-4.500 4-8 8.500-8.500M14.500 19q.5-3.500 4.500-4" />
        <circle cx="17.500" cy="17.500" r="1.600" fill="#000" stroke="none" />
      </svg>
      <svg viewBox="0 0 22 20" className="mt-[26px] ml-[31px] h-5 w-[22px] fill-none stroke-black" strokeWidth="1.300">
        <path d="M16 1.200q2.200 0 1.700 2.300L11 15.500 7.500 18 8 13.500 14.500 2q.7-.8 1.500-.8M9.500 10Q3 9 1.800 13q-.5 3 2 2.500 2-1 3 .5-1 3-4 2.500M16.500 9q1-3 3-2.200 2 1-.5 3.200-2 1.500-3.500 1" />
      </svg>
      <div className="ml-[30px] flex w-[84px] flex-col items-center pt-[5px] text-[17.200px] leading-[32px] whitespace-nowrap">
        <span>12:28 PM</span>
        <span className="tracking-[0.200px]">4/21/2025</span>
      </div>
      <div className="relative mt-6 ml-7 h-9 w-9">
        <svg viewBox="0 0 36 36" className="h-9 w-9">
          <path d="M0 0h24v19H13v5l-5-5H0z" fill="#000" />
          <path d="M5 5.500h14M5 9.500h14M5 13.500h14" stroke="#e1ecf5" strokeWidth="1.300" />
        </svg>
        <span className="absolute top-[11px] left-[11px] flex h-[25px] w-[25px] items-center justify-center rounded-full border border-[#77797c] bg-[#d3d5d8]/90 text-[17px] font-semibold">2</span>
      </div>
      <span className="mr-[5px] ml-auto h-[72px] w-[2px] bg-[#b4bfcb]" />
    </div>
  );
}

function Taskbar() {
  return (
    <footer className="relative flex h-[72px] bg-[linear-gradient(90deg,#dfe9f2_0px,#e1ecf4_280px,#d3e1f7_400px,#d6ddf0_560px,#d8dbee_660px,#d2e0f8_745px,#d6dcf0_860px,#d9dcee_1000px,#d8dcee_1160px,#d2dff5_1280px,#d8dcee_1400px,#dfe1ee_1500px,#e0ebf5_1570px,#e1ecf5_1913px)] pl-[284px]">
      <span className="absolute top-0 left-0 h-[2px] w-[1532px] bg-[#c9d3e6]" />
      {apps.map(({ icon, state }, i) => (
        <div key={i} className="flex w-[78px] shrink-0 flex-col items-center pt-[9px]">
          <div className={`flex h-[57px] w-[56px] flex-col items-center rounded-[5px] pt-[10px] ${state === "active" ? "bg-[#e9eef9] shadow-[0_0_0_1px_rgba(190,200,220,0.5)]" : ""}`}>
            {icon}
            {state === "active" && <span className="mt-[6px] h-[5px] w-6 rounded-full bg-[#0078d4]" />}
            {state === "open" && <span className="mt-[6px] h-[5px] w-[9px] rounded-full bg-[#797f8c]" />}
          </div>
        </div>
      ))}
      <Tray />
    </footer>
  );
}

export default function App() {
  return (
    <div className="flex h-[1080px] w-[1920px] flex-col overflow-hidden bg-white font-['Open_Sans',sans-serif]">
      <TabStrip />
      <Toolbar />
      <div className="flex h-[827px] overflow-hidden bg-white pl-9">
        <Sidebar />
        <Secrets />
        <Scrollbar />
      </div>
      <Taskbar />
    </div>
  );
}
